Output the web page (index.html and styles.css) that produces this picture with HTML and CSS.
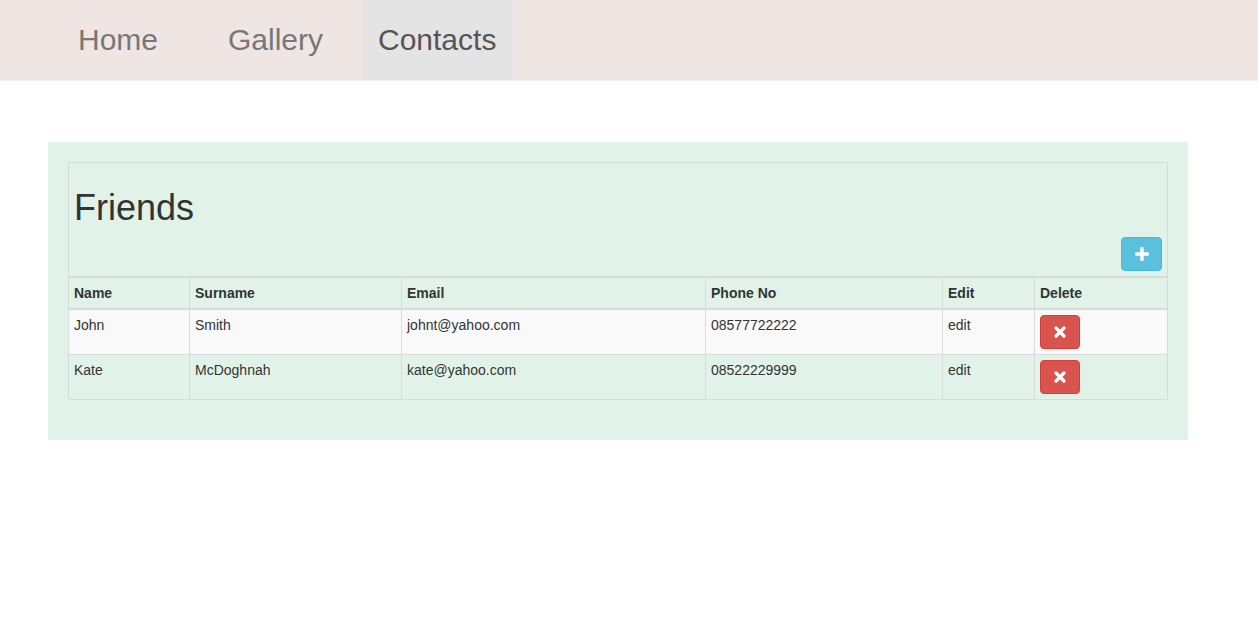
FILE: index.html
```html
<!DOCTYPE html>
<html>
<head>
<meta charset="utf-8">
<link rel="stylesheet" href="styles.css">
</head>
<body>
<nav class="navbar">
  <ul class="nav">
    <li><a href="#">Home</a></li>
    <li><a href="#">Gallery</a></li>
    <li><a href="#" class="active">Contacts</a></li>
  </ul>
</nav>
<main class="page">
  <section class="panel">
    <table class="friends">
      <colgroup>
        <col style="width:121px"><col style="width:212px"><col style="width:304px"><col style="width:237px"><col style="width:92px"><col style="width:133px">
      </colgroup>
      <thead>
        <tr class="title-row">
          <th colspan="6">
            <h1>Friends</h1>
            <div class="add-wrap">
              <button class="btn btn-info" type="button" aria-label="Add">
                <svg width="14" height="14" viewBox="0 0 14 14"><path d="M7 1.5v11M1.5 7h11" stroke="#fff" stroke-width="3.4" stroke-linecap="round"/></svg>
              </button>
            </div>
          </th>
        </tr>
        <tr class="head-row">
          <th>Name</th><th>Surname</th><th>Email</th><th>Phone No</th><th>Edit</th><th>Delete</th>
        </tr>
      </thead>
      <tbody>
        <tr class="odd">
          <td>John</td><td>Smith</td><td>johnt@yahoo.com</td><td>08577722222</td><td>edit</td>
          <td><button class="btn btn-danger" type="button" aria-label="Delete"><svg width="14" height="14" viewBox="0 0 14 14"><path d="M3 3l8 8M11 3l-8 8" stroke="#fff" stroke-width="3.2" stroke-linecap="round"/></svg></button></td>
        </tr>
        <tr>
          <td>Kate</td><td>McDoghnah</td><td>kate@yahoo.com</td><td>08522229999</td><td>edit</td>
          <td><button class="btn btn-danger" type="button" aria-label="Delete"><svg width="14" height="14" viewBox="0 0 14 14"><path d="M3 3l8 8M11 3l-8 8" stroke="#fff" stroke-width="3.2" stroke-linecap="round"/></svg></button></td>
        </tr>
      </tbody>
    </table>
  </section>
</main>
</body>
</html>
```
FILE: styles.css
```css
* { box-sizing: border-box; }
html, body { margin: 0; padding: 0; }
body {
  font-family: "Liberation Sans", Arial, Helvetica, sans-serif;
  font-size: 14px;
  line-height: 20px;
  color: #333;
  background: #fff;
}
.navbar {
  background: #efe6e4;
  height: 81px;
  border-bottom: 1px solid #f4efee;
  padding-left: 63px;
}
.nav {
  list-style: none;
  margin: 0;
  padding: 0;
  display: flex;
  height: 80px;
}
.nav li { display: flex; min-width: 150px; }
.nav a {
  display: block;
  padding: 20px 15px;
  line-height: 40px;
  font-size: 30px;
  color: #777;
  text-decoration: none;
  height: 80px;
  min-width: 150px;
}
.nav a.active {
  background: #e5e4e4;
  color: #555;
}
.page { padding: 61px 0 0 48px; }
.panel {
  width: 1140px;
  background: #e1f3e9;
  padding: 20px 20px 40px 20px;
}
.friends {
  width: 1099px;
  table-layout: fixed;
  border-collapse: collapse;
  border: 1px solid #d8dfdb;
}
.friends th, .friends td {
  border: 1px solid #d6dcd9;
  padding: 5px;
  text-align: left;
  vertical-align: top;
}
.friends thead th { border-bottom-width: 2px; vertical-align: bottom; }
.title-row th { font-weight: normal; padding: 5px; }
h1 {
  font-size: 36px;
  font-weight: 500;
  line-height: 39.6px;
  margin: 20px 0 9px;
  color: #333;
}
.add-wrap { display: flex; justify-content: flex-end; }
.head-row th { font-weight: bold; }
tbody tr.odd td { background: #f9f9f9; }
.btn {
  display: inline-flex;
  align-items: center;
  justify-content: center;
  padding: 9px 12px;
  border: 1px solid transparent;
  border-radius: 4px;
  height: 34px;
  width: 40px;
  cursor: pointer;
}
.btn-info { background: #5bc0de; border-color: #46b8da; width: 41px; }
.btn-danger { background: #d9534f; border-color: #d43f3a; }
.btn svg { display: block; flex: none; }
```
